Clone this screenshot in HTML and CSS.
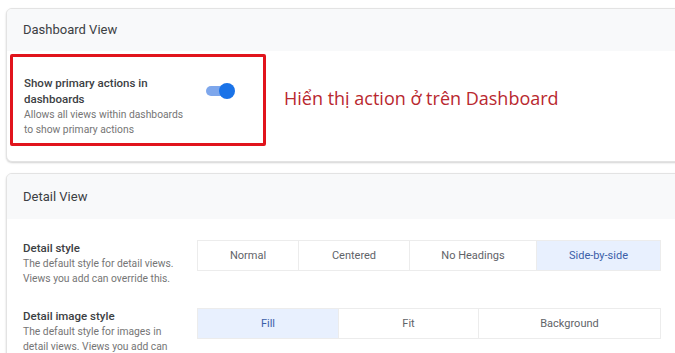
FILE: index.html
```html
<!DOCTYPE html>
<html lang="vi">
<head>
    <meta charset="UTF-8">
    <meta name="viewport" content="width=device-width, initial-scale=1.0">
    <title>View settings</title>
    <link rel="stylesheet" href="styles.css">
</head>
<body>
    <div class="page">
        <section class="card">
            <div class="card-header">Dashboard View</div>
            <div class="card-body dash-body">
                <div class="highlight">
                    <div class="setting-text">
                        <div class="setting-title">Show primary actions in dashboards</div>
                        <div class="setting-desc">Allows all views within dashboards to show primary actions</div>
                    </div>
                    <div class="toggle">
                        <span class="track"></span>
                        <span class="knob"></span>
                    </div>
                </div>
                <div class="note">Hiển thị action ở trên Dashboard</div>
            </div>
        </section>

        <section class="card">
            <div class="card-header tall">Detail View</div>
            <div class="card-body detail-body">
                <div class="row">
                    <div class="setting-text">
                        <div class="setting-title">Detail style</div>
                        <div class="setting-desc">The default style for detail views. Views you add can override this.</div>
                    </div>
                    <div class="segments style-seg">
                        <button>Normal</button>
                        <button>Centered</button>
                        <button>No Headings</button>
                        <button class="active">Side-by-side</button>
                    </div>
                </div>
                <div class="row">
                    <div class="setting-text">
                        <div class="setting-title">Detail image style</div>
                        <div class="setting-desc">The default style for images in detail views. Views you add can override this.</div>
                    </div>
                    <div class="segments image-seg">
                        <button class="active">Fill</button>
                        <button>Fit</button>
                        <button>Background</button>
                    </div>
                </div>
            </div>
        </section>
    </div>
</body>
</html>
```

FILE: styles.css
```css
body {
    margin: 0;
    background-color: #fff;
    font-family: Roboto, "Noto Sans", sans-serif;
    color: #202124;
    overflow: hidden;
}

.page {
    padding: 8px 0 0 6px;
    display: flex;
    flex-direction: column;
    gap: 11px;
}

.card {
    width: 720px;
    border: 1px solid #e3e3e3;
    border-radius: 6px;
    box-shadow: 0 1px 2px rgba(0,0,0,0.18);
    background-color: #fff;
    overflow: hidden;
}

.card-header {
    background-color: #f8f9fa;
    height: 42px;
    line-height: 42px;
    padding-left: 16px;
    font-size: 13px;
    color: #3c4043;
}

.card-header.tall {
    height: 45px;
    line-height: 45px;
}

.dash-body {
    height: 110px;
    display: flex;
    align-items: flex-start;
    padding: 3px 0 0 3px;
    box-sizing: border-box;
}

.highlight {
    width: 256px;
    height: 92px;
    border: 3px solid #e1141c;
    border-radius: 2px;
    display: flex;
    align-items: flex-start;
    padding: 18px 0 0 11px;
    box-sizing: border-box;
}

.highlight .setting-text {
    width: 170px;
}

.setting-title {
    font-size: 11.5px;
    font-weight: 500;
    line-height: 16px;
    color: #3c4043;
}

.setting-desc {
    font-size: 10.3px;
    line-height: 15px;
    color: #757575;
}

.toggle {
    position: relative;
    width: 34px;
    height: 18px;
    margin: 7px 0 0 10px;
}

.track {
    position: absolute;
    left: 2px;
    top: 4px;
    width: 26px;
    height: 10px;
    border-radius: 5px;
    background-color: #7ea7ec;
}

.knob {
    position: absolute;
    left: 15px;
    top: 1px;
    width: 16px;
    height: 16px;
    border-radius: 50%;
    background-color: #1a73e8;
}

.note {
    margin: 32px 0 0 18px;
    font-family: "Open Sans", sans-serif;
    font-size: 18px;
    color: #b9282f;
}

.detail-body {
    padding: 21px 0 8px 16px;
    display: flex;
    flex-direction: column;
    gap: 22px;
}

.row {
    display: flex;
    align-items: flex-start;
}

.row .setting-text {
    width: 158px;
    margin-right: 16px;
}

.segments {
    display: flex;
    width: 464px;
    height: 31px;
    border: 1px solid #ececec;
    box-sizing: border-box;
}

.segments button {
    border: none;
    border-left: 1px solid #ececec;
    background-color: #fff;
    font-family: Roboto, "Noto Sans", sans-serif;
    font-size: 11px;
    color: #5f6368;
    padding: 0;
    cursor: pointer;
}

.segments button:first-child {
    border-left: none;
}

.segments button.active {
    background-color: #e8f0fe;
    color: #3b5ea8;
}

.style-seg button:nth-child(1) { width: 100px; }
.style-seg button:nth-child(2) { width: 111px; }
.style-seg button:nth-child(3) { width: 127px; }
.style-seg button:nth-child(4) { flex: 1; }

.image-seg button:nth-child(1) { width: 140px; }
.image-seg button:nth-child(2) { width: 140px; }
.image-seg button:nth-child(3) { flex: 1; }
```
